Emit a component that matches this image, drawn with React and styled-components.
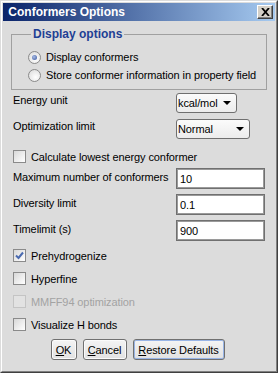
import React from 'react'
import styled, { createGlobalStyle } from 'styled-components'

const GlobalStyle = createGlobalStyle`
  html, body {
    margin: 0;
    padding: 0;
    background: #dcdcdc;
  }
  * {
    box-sizing: border-box;
  }
`;

const Window = styled.div`
  width: 278px;
  height: 373px;
  background: #dcdcdc;
  border: 1px solid;
  border-color: #dcdcdc #404040 #404040 #dcdcdc;
  font-family: "Liberation Sans", Arial, sans-serif;
  font-size: 11px;
  letter-spacing: -0.1px;
  color: #000;
  display: flex;
  flex-direction: column;
`;

const Frame = styled.div`
  flex: 1;
  border: 1px solid;
  border-color: #ffffff #808080 #808080 #ffffff;
  padding: 1px;
  display: flex;
  flex-direction: column;
`;

const TitleBar = styled.div`
  height: 18px;
  display: flex;
  align-items: center;
  justify-content: space-between;
  padding: 0 2px 0 2px;
  background: linear-gradient(to right, #0a246a, #a6caf0);
`;

const Title = styled.div`
  color: #fff;
  font-weight: bold;
  font-size: 12px;
  line-height: 14px;
  letter-spacing: 0;
`;

const CloseButton = styled.div`
  width: 16px;
  height: 14px;
  background: #d4d0c8;
  border: 1px solid;
  border-color: #ffffff #404040 #404040 #ffffff;
  box-shadow: inset -1px -1px 0 #808080;
  display: flex;
  align-items: center;
  justify-content: center;
`;

const Content = styled.div`
  flex: 1;
  display: flex;
  flex-direction: column;
  padding: 6px 0 0 0;
`;

const Group = styled.fieldset`
  margin: 0 8px;
  padding: 7px 0 5px 16px;
  border: 1px solid #a0a0a0;
  display: flex;
  flex-direction: column;
`;

const Legend = styled.legend`
  margin-left: 3px;
  padding: 0 2px;
  color: #1f3f94;
  font-weight: bold;
  font-size: 12px;
  line-height: 14px;
  letter-spacing: 0;
`;

const OptionRow = styled.label`
  height: ${p => p.$h || 18}px;
  display: flex;
  align-items: center;
  gap: 5px;
  color: ${p => (p.$disabled ? '#a3a3a3' : '#000')};
`;

const Radio = styled.span`
  width: 13px;
  height: 13px;
  border-radius: 50%;
  border: 1px solid #8a8a8a;
  background: radial-gradient(circle at 60% 65%, #ffffff 0%, #e4e4e4 70%, #d0d0d0 100%);
  display: flex;
  align-items: center;
  justify-content: center;
  &::after {
    content: '';
    width: 5px;
    height: 5px;
    border-radius: 50%;
    background: ${p => (p.$checked ? 'radial-gradient(circle at 40% 40%, #a9bde6, #34519a)' : 'transparent')};
  }
`;

const Box = styled.span`
  width: 13px;
  height: 13px;
  border: 1px solid ${p => (p.$disabled ? '#c4c4c4' : '#8a8a8a')};
  background: ${p => (p.$disabled ? '#e2e2e2' : 'linear-gradient(135deg, #d8d8d8, #ffffff)')};
  display: flex;
  align-items: center;
  justify-content: center;
`;

const Form = styled.div`
  display: flex;
  flex-direction: column;
  padding: 3px 10px 0 10px;
`;

const FieldRow = styled.div`
  display: grid;
  grid-template-columns: 163px 1fr;
  align-items: start;
  margin-bottom: ${p => p.$mb ?? 5}px;
`;

const Label = styled.div`
  line-height: 14px;
  padding-top: ${p => p.$pt || 0}px;
`;

const Combo = styled.div`
  width: ${p => p.$w}px;
  height: 20px;
  border: 1px solid #6f6f6f;
  border-radius: 3px;
  background: linear-gradient(#fbfbfb, #ececec);
  display: flex;
  align-items: center;
  justify-content: space-between;
  padding: 0 5px 0 1px;
`;

const Arrow = styled.span`
  width: 0;
  height: 0;
  border-left: 4px solid transparent;
  border-right: 4px solid transparent;
  border-top: 4px solid #000;
`;

const Input = styled.div`
  width: 89px;
  height: 21px;
  border: 1px solid #707070;
  box-shadow: inset 0 0 0 1px #9a9a9a;
  background: #fff;
  display: flex;
  align-items: center;
  padding-left: 3px;
`;

const Checks = styled.div`
  display: flex;
  flex-direction: column;
`;

const Buttons = styled.div`
  display: flex;
  justify-content: center;
  gap: 6px;
  margin-top: 3px;
  padding-right: 3px;
`;

const Button = styled.div`
  width: ${p => p.$w}px;
  height: 21px;
  border: 1px solid #707070;
  border-radius: 3px;
  background: linear-gradient(#f4f4f4, #e2e2e2);
  box-shadow: ${p => (p.$focus ? 'inset 0 0 0 1px #98b4e6' : 'inset 0 0 0 1px #fbfbfb')};
  display: flex;
  align-items: center;
  justify-content: center;
  & u {
    text-decoration: underline;
  }
`;

function Check({ checked, disabled }) {
  return (
    <Box $disabled={disabled}>
      {checked && (
        <svg width="9" height="9" viewBox="0 0 9 9">
          <path d="M1 4.5 L3.5 7 L8 1.5" fill="none" stroke="#4a6ab0" strokeWidth="2" />
        </svg>
      )}
    </Box>
  );
}

export default function App() {
  return (
    <>
      <GlobalStyle />
      <Window>
        <Frame>
          <TitleBar>
            <Title>&nbsp;Conformers Options</Title>
            <CloseButton>
              <svg width="9" height="8" viewBox="0 0 9 8">
                <path d="M1 0 L8 8 M8 0 L1 8" stroke="#000" strokeWidth="1.8" />
              </svg>
            </CloseButton>
          </TitleBar>
          <Content>
            <Group>
              <Legend>Display options</Legend>
              <OptionRow>
                <Radio $checked />
                Display conformers
              </OptionRow>
              <OptionRow>
                <Radio />
                Store conformer information in property field
              </OptionRow>
            </Group>
            <Form>
              <FieldRow $mb={6}>
                <Label>Energy unit</Label>
                <Combo $w={61}>kcal/mol<Arrow /></Combo>
              </FieldRow>
              <FieldRow $mb={6}>
                <Label>Optimization limit</Label>
                <Combo $w={74}>Normal<Arrow /></Combo>
              </FieldRow>
              <Checks>
                <OptionRow $h={23}>
                  <Check />
                  Calculate lowest energy conformer
                </OptionRow>
              </Checks>
              <FieldRow $mb={5}>
                <Label $pt={2}>Maximum number of conformers</Label>
                <Input>10</Input>
              </FieldRow>
              <FieldRow $mb={5}>
                <Label $pt={2}>Diversity limit</Label>
                <Input>0.1</Input>
              </FieldRow>
              <FieldRow $mb={3}>
                <Label $pt={2}>Timelimit (s)</Label>
                <Input>900</Input>
              </FieldRow>
              <Checks>
                <OptionRow $h={23}>
                  <Check checked />
                  Prehydrogenize
                </OptionRow>
                <OptionRow $h={23}>
                  <Check />
                  Hyperfine
                </OptionRow>
                <OptionRow $h={23} $disabled>
                  <Check disabled />
                  MMFF94 optimization
                </OptionRow>
                <OptionRow $h={23}>
                  <Check />
                  Visualize H bonds
                </OptionRow>
              </Checks>
            </Form>
            <Buttons>
              <Button $w={26}><span><u>O</u>K</span></Button>
              <Button $w={44}><span><u>C</u>ancel</span></Button>
              <Button $w={92} $focus><span><u>R</u>estore Defaults</span></Button>
            </Buttons>
          </Content>
        </Frame>
      </Window>
    </>
  );
}
